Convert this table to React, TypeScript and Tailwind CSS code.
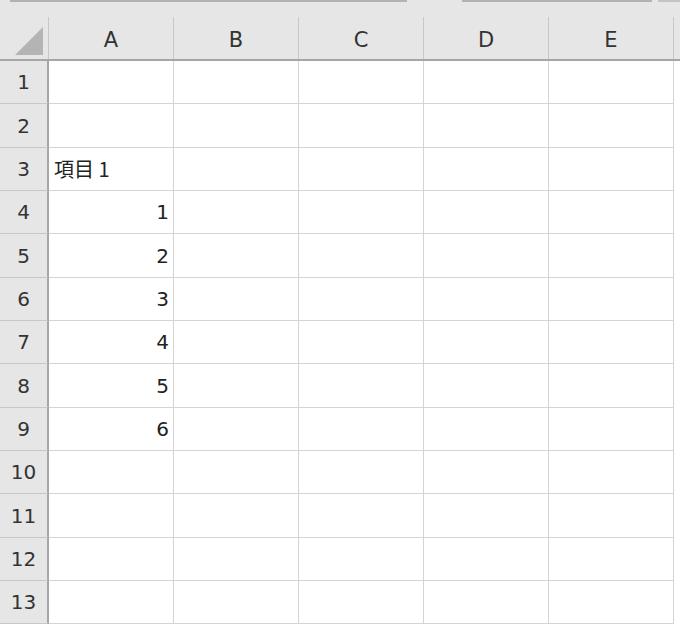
const cols = ['A', 'B', 'C', 'D', 'E']
const rowHeights = [43, 44, 43, 43, 44, 43, 43, 44, 43, 43, 44, 43, 43]

const cellValue = (row: number, col: number) => {
  if (col !== 0) return null
  if (row === 3) return { text: '項目 1', align: 'left' }
  if (row >= 4 && row <= 9) return { text: String(row - 3), align: 'right' }
  return null
}

export default function App() {
  return (
    <div className="w-[680px] h-[631px] bg-white overflow-hidden font-['DejaVu_Sans','Noto_Sans_CJK_JP',sans-serif] text-[#222]">
      {/* top strip above the sheet */}
      <div className="h-[17px] bg-[#e6e6e6] flex pl-[10px]">
        <div className="w-[397px] h-[2px] shrink-0 bg-[#b2b2b2]" />
        <div className="w-[190px] h-[2px] shrink-0 ml-[55px] bg-[#b2b2b2]" />
        <div className="w-[22px] h-[2px] shrink-0 ml-[6px] bg-[#c4c4c4]" />
      </div>

      {/* column headers */}
      <div className="flex h-[44px] bg-[#e6e6e6] border-b-2 border-[#a6a6a6]">
        <div className="w-[49px] shrink-0 border-r border-[#c8c8c8] relative">
          <svg className="absolute left-[15px] top-[10px]" width="28" height="28" viewBox="0 0 28 28">
            <polygon points="28,0 28,28 0,28" fill="#b4b4b4" />
          </svg>
        </div>
        {cols.map(c => (
          <div
            key={c}
            className="w-[125px] shrink-0 border-r border-[#c8c8c8] flex items-center justify-center pt-[5px] text-[21px] text-[#333]"
          >
            {c}
          </div>
        ))}
      </div>

      {/* rows */}
      {rowHeights.map((h, i) => {
        const row = i + 1
        return (
          <div key={row} className="flex" style={{ height: h }}>
            <div className="w-[49px] shrink-0 bg-[#e6e6e6] border-r-2 border-b border-r-[#a6a6a6] border-b-[#c8c8c8] flex items-center justify-center text-[20px] text-[#333]">
              {row}
            </div>
            {cols.map((c, ci) => {
              const v = cellValue(row, ci)
              return (
                <div
                  key={c}
                  className={
                    'w-[125px] shrink-0 border-r border-b border-[#d4d4d4] flex items-center text-[20px] ' +
                    (v?.align === 'right' ? 'justify-end pr-[4px]' : 'justify-start pl-[5px]')
                  }
                >
                  {v && (v.align === 'left' ? <span className="font-['Noto_Sans_CJK_JP',sans-serif]">{v.text}</span> : v.text)}
                </div>
              )
            })}
          </div>
        )
      })}
    </div>
  )
}
